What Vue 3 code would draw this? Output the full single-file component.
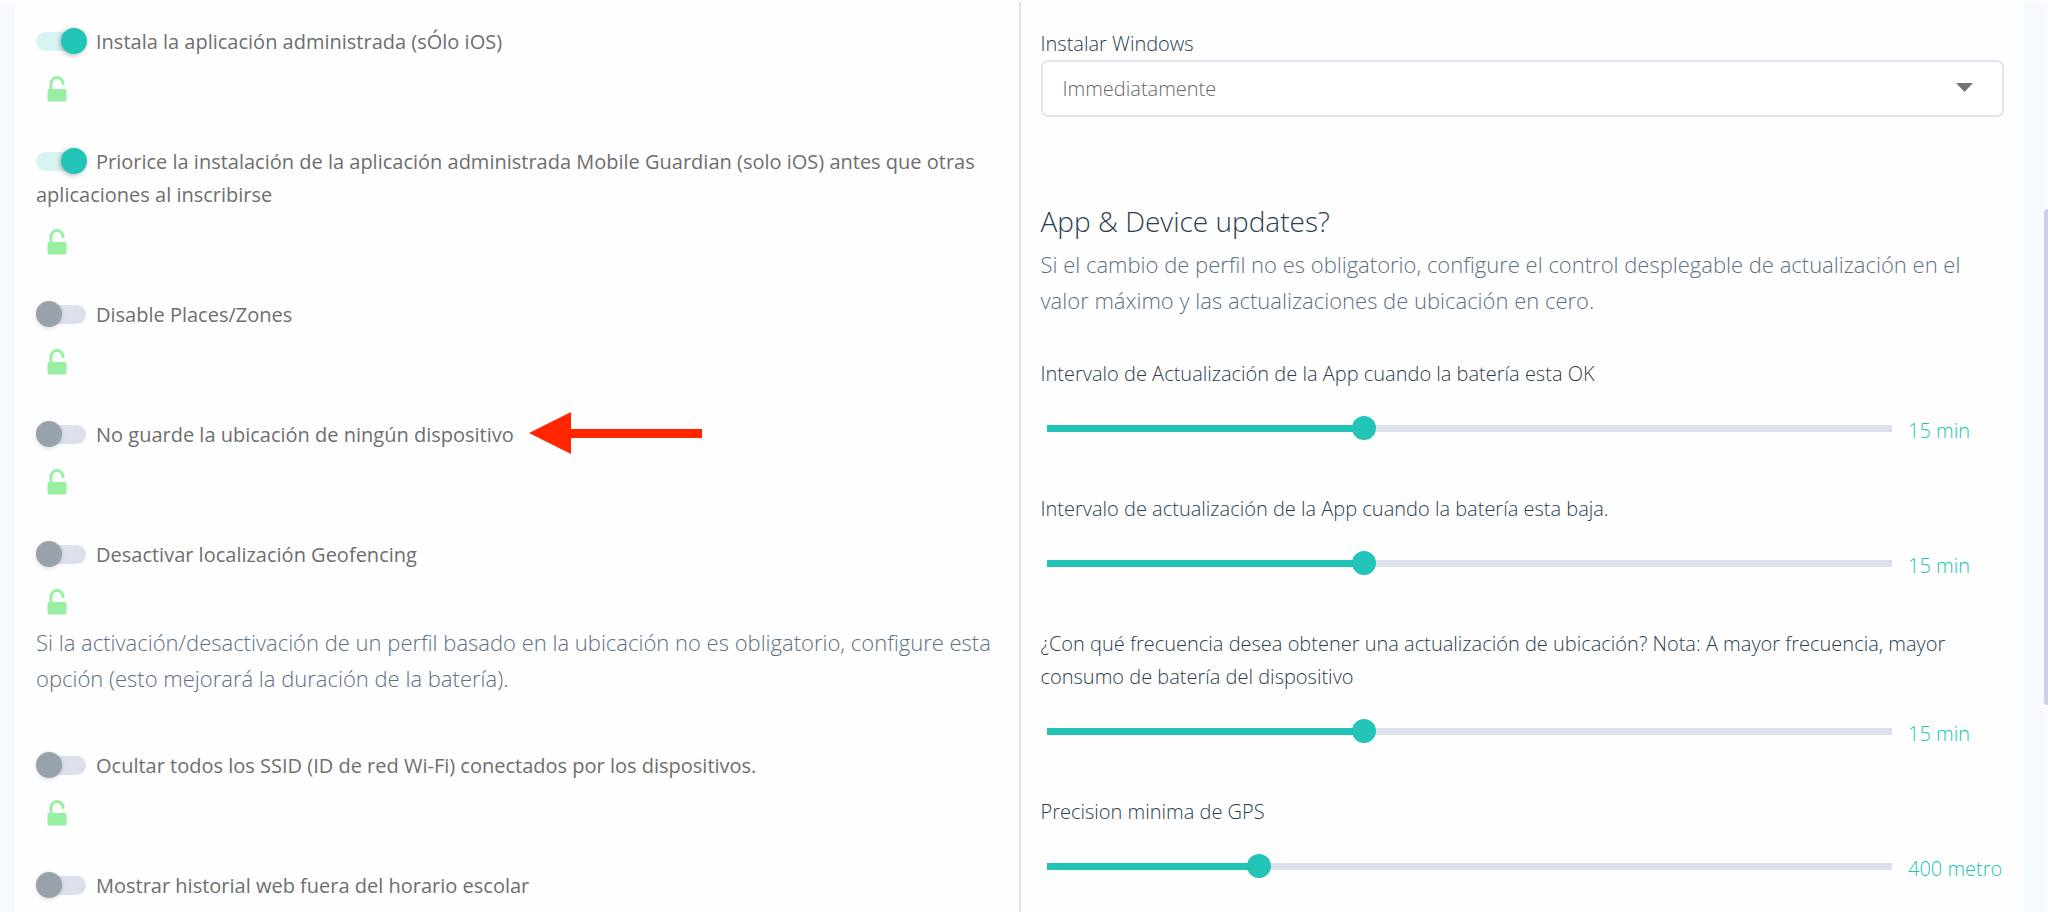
<script setup>
import { reactive, ref } from 'vue'

const toggles = reactive([
  { id: 'install-app', label: 'Instala la aplicación administrada (sÓlo iOS)', on: true, lock: true },
  { id: 'prioritise', label: 'Priorice la instalación de la aplicación administrada Mobile Guardian (solo iOS) antes que otras aplicaciones al inscribirse', on: true, lock: true },
  { id: 'places', label: 'Disable Places/Zones', on: false, lock: true },
  { id: 'location', label: 'No guarde la ubicación de ningún dispositivo', on: false, lock: true, arrow: true },
  {
    id: 'geofencing',
    label: 'Desactivar localización Geofencing',
    on: false,
    lock: true,
    note: 'Si la activación/desactivación de un perfil basado en la ubicación no es obligatorio, configure esta opción (esto mejorará la duración de la batería).',
  },
  { id: 'ssid', label: 'Ocultar todos los SSID (ID de red Wi-Fi) conectados por los dispositivos.', on: false, lock: true },
  { id: 'history', label: 'Mostrar historial web fuera del horario escolar', on: false, lock: false },
])

const sliders = reactive([
  { id: 'battery-ok', label: 'Intervalo de Actualización de la App cuando la batería esta OK', value: 37.2, text: '15 min' },
  { id: 'battery-low', label: 'Intervalo de actualización de la App cuando la batería esta baja.', value: 37.2, text: '15 min' },
  { id: 'frequency', label: '¿Con qué frecuencia desea obtener una actualización de ubicación? Nota: A mayor frecuencia, mayor consumo de batería del dispositivo', value: 37.2, text: '15 min' },
  { id: 'gps', label: 'Precision minima de GPS', value: 24.4, text: '400 metro' },
])

const windowsUpdate = ref('now')
</script>

<template>
  <div class="page">
    <main class="panel">
      <section class="column">
        <div v-for="t in toggles" :key="t.id" class="setting">
          <label class="toggle-label" :for="t.id">
            <input :id="t.id" v-model="t.on" class="toggle" type="checkbox" role="switch" />{{ t.label }}
          </label>
          <svg v-if="t.arrow" class="arrow" viewBox="0 0 173 42" aria-hidden="true">
            <path d="M0 21 42 0V17H173V26H42V42Z" fill="#ff2600" />
          </svg>
          <button v-if="t.lock" class="lock" type="button" aria-label="Desbloqueado">
            <svg viewBox="0 0 20 26" aria-hidden="true">
              <path d="M4 14V7.500a6 6 0 0 1 12 0" fill="none" stroke="#98efa4" stroke-width="3" stroke-linecap="round" />
              <rect x="0.500" y="13" width="19" height="12.500" rx="1.500" fill="#98efa4" />
            </svg>
          </button>
          <p v-if="t.note" class="note setting-note">{{ t.note }}</p>
        </div>
      </section>

      <section class="column column-right">
        <label class="field-label" for="windows-update">Instalar Windows</label>
        <div class="select-box">
          <select id="windows-update" v-model="windowsUpdate">
            <option value="now">Immediatamente</option>
          </select>
          <svg class="caret" viewBox="0 0 17 9" aria-hidden="true">
            <path d="M0 0H17L8.500 9Z" fill="#757575" />
          </svg>
        </div>

        <h2>App &amp; Device updates?</h2>
        <p class="note">
          Si el cambio de perfil no es obligatorio, configure el control desplegable de actualización en el valor máximo y las actualizaciones de ubicación en cero.
        </p>

        <div class="sliders">
          <div v-for="s in sliders" :key="s.id">
            <label class="field-label" :for="s.id">{{ s.label }}</label>
            <div class="slider-row">
              <input :id="s.id" v-model="s.value" type="range" min="0" max="100" step="any" :style="{ '--fill': s.value + '%' }" />
              <output :for="s.id">{{ s.text }}</output>
            </div>
          </div>
        </div>
      </section>
    </main>
    <div class="scrollbar"><div class="thumb"></div></div>
  </div>
</template>

<style>
body {
  margin: 0;
  overflow: hidden;
}
</style>

<style scoped>
.page {
  display: grid;
  grid-template-columns: 1fr 4px;
  column-gap: 20px;
  height: 100vh;
  box-sizing: border-box;
  padding-left: 15px;
  border-top: 2px solid #fff;
  overflow: hidden;
  background: #f6fafe;
  color: #2b3e50;
  font-family: "Open Sans", "Noto Sans", sans-serif;
  font-size: 20px;
  font-weight: 300;
  line-height: 33px;
}

.panel {
  display: grid;
  grid-template-columns: calc(50% - 1px) 1fr;
  background: linear-gradient(#fbfbfb, #fefefe 10px);
}

.column {
  min-width: 0;
  padding: 23px 21px 0;
}

.column-right {
  padding: 25px 20px 0;
  border-left: 2px solid #e2e2e2;
}

.setting {
  position: relative;
  margin-bottom: 43px;
}

.toggle-label {
  display: block;
  color: #6e6e6e;
  font-weight: 400;
}

.toggle {
  appearance: none;
  position: relative;
  width: 50px;
  height: 26px;
  margin: 0 10px 0 0;
  vertical-align: -5px;
}

.toggle::before {
  content: "";
  position: absolute;
  inset: 4px 0 3px;
  border-radius: 10px;
  background: #dcdfec;
}

.toggle::after {
  content: "";
  position: absolute;
  top: 0;
  left: 0;
  width: 26px;
  height: 26px;
  border-radius: 50%;
  background: #97a2ab;
  box-shadow: 0 1px 4px rgba(0, 0, 0, 0.15);
}

.toggle:checked::before {
  background: #d7f3f2;
}

.toggle:checked::after {
  left: 25px;
  background: #21c4b7;
  box-shadow: -1px 1px 5px rgba(0, 0, 0, 0.3);
}

.lock {
  display: block;
  width: 20px;
  height: 26px;
  margin: 18px 0 0 11px;
  padding: 0;
  border: 0;
  background: none;
}

.lock svg {
  display: block;
  width: 20px;
  height: 26px;
}

.arrow {
  position: absolute;
  top: -6px;
  left: 493px;
  width: 173px;
  height: 42px;
}

.note {
  margin: 0;
  color: #5c7086;
  font-size: 22px;
  line-height: 36px;
}

.setting-note {
  margin: 9px 0 53px;
}

.field-label {
  display: block;
}

.select-box {
  position: relative;
  margin-bottom: 86px;
}

select {
  appearance: none;
  display: block;
  box-sizing: border-box;
  width: 100%;
  height: 57px;
  padding: 0 60px 0 20px;
  border: 2px solid #e0e3f0;
  border-radius: 7px;
  background: #fff;
  color: #666;
  font: inherit;
}

.caret {
  position: absolute;
  top: 23px;
  right: 31px;
  width: 17px;
  height: 9px;
  pointer-events: none;
}

h2 {
  margin: 0 0 7px;
  font-size: 28px;
  font-weight: 300;
  line-height: 36px;
}

.sliders {
  display: flex;
  flex-direction: column;
  gap: 48px;
  margin-top: 39px;
}

.slider-row {
  display: flex;
  align-items: flex-start;
  gap: 16px;
  height: 28px;
  margin-top: 26px;
  padding-left: 6px;
}

input[type="range"] {
  appearance: none;
  flex: 1;
  min-width: 0;
  height: 24px;
  margin: 0;
  background: linear-gradient(to right, #21c4b7 var(--fill), #dcdfec var(--fill)) center / 100% 7px no-repeat;
}

input[type="range"]::-webkit-slider-thumb {
  appearance: none;
  width: 24px;
  height: 24px;
  border-radius: 50%;
  background: #21c4b7;
}

output {
  width: 96px;
  color: #21c4b7;
  line-height: 30px;
  white-space: nowrap;
}

.scrollbar {
  background: #fafafa;
}

.thumb {
  height: 496px;
  margin-top: 207px;
  border-radius: 4px 0 0 4px;
  background: #c8d1e6;
}
</style>
